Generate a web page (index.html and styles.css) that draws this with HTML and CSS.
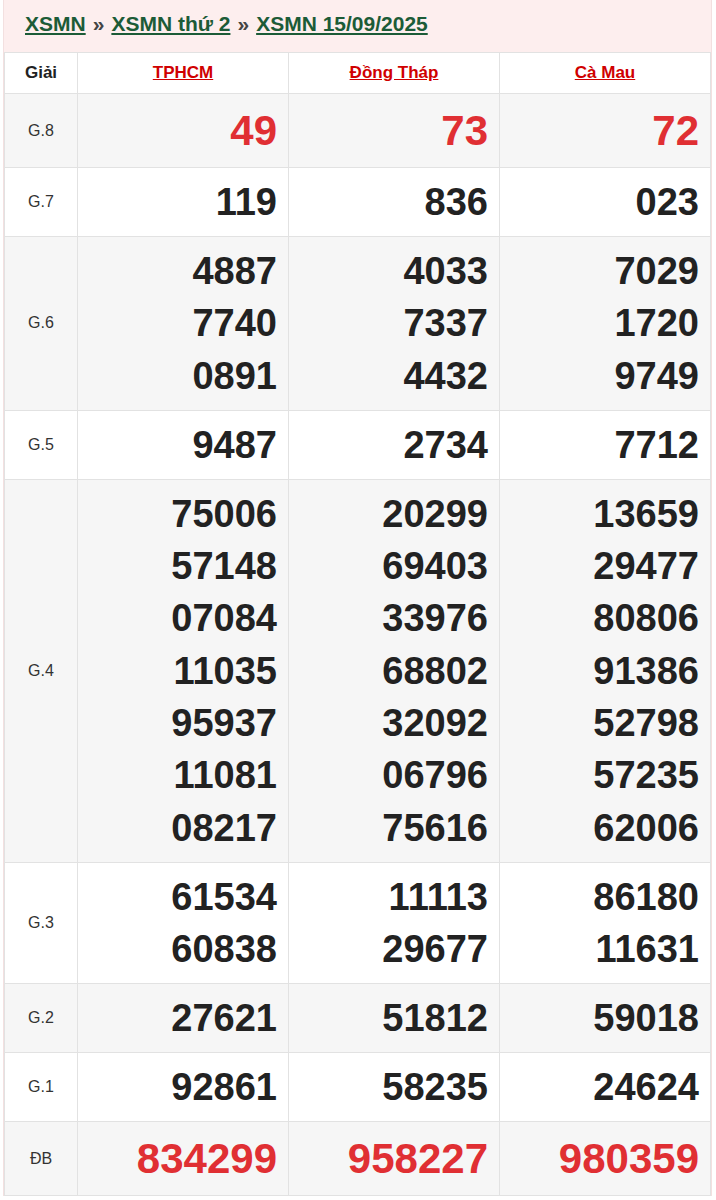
FILE: index.html
```html
<!DOCTYPE html>
<html lang="vi">
<head>
<meta charset="utf-8">
<title>XSMN 15/09/2025</title>
<link rel="stylesheet" href="styles.css">
</head>
<body>
<div class="box">
  <div class="crumbs">
    <a href="#">XSMN</a><span class="sep">»</span><a href="#">XSMN thứ 2</a><span class="sep">»</span><a href="#">XSMN 15/09/2025</a>
  </div>
  <table class="kq">
    <colgroup><col class="c-label"><col class="c-prov"><col class="c-prov"><col class="c-prov"></colgroup>
    <thead>
      <tr><th class="lbl-h">Giải</th><th><a href="#">TPHCM</a></th><th><a href="#">Đồng Tháp</a></th><th><a href="#">Cà Mau</a></th></tr>
    </thead>
    <tbody>
      <tr class="alt big">
        <td class="lbl">G.8</td><td><div class="n red">49</div></td><td><div class="n red">73</div></td><td><div class="n red">72</div></td>
      </tr>
      <tr>
        <td class="lbl">G.7</td><td><div class="n">119</div></td><td><div class="n">836</div></td><td><div class="n">023</div></td>
      </tr>
      <tr class="alt">
        <td class="lbl">G.6</td>
        <td><div class="n">4887</div><div class="n">7740</div><div class="n">0891</div></td>
        <td><div class="n">4033</div><div class="n">7337</div><div class="n">4432</div></td>
        <td><div class="n">7029</div><div class="n">1720</div><div class="n">9749</div></td>
      </tr>
      <tr>
        <td class="lbl">G.5</td><td><div class="n">9487</div></td><td><div class="n">2734</div></td><td><div class="n">7712</div></td>
      </tr>
      <tr class="alt">
        <td class="lbl">G.4</td>
        <td><div class="n">75006</div><div class="n">57148</div><div class="n">07084</div><div class="n">11035</div><div class="n">95937</div><div class="n">11081</div><div class="n">08217</div></td>
        <td><div class="n">20299</div><div class="n">69403</div><div class="n">33976</div><div class="n">68802</div><div class="n">32092</div><div class="n">06796</div><div class="n">75616</div></td>
        <td><div class="n">13659</div><div class="n">29477</div><div class="n">80806</div><div class="n">91386</div><div class="n">52798</div><div class="n">57235</div><div class="n">62006</div></td>
      </tr>
      <tr>
        <td class="lbl">G.3</td>
        <td><div class="n">61534</div><div class="n">60838</div></td>
        <td><div class="n">11113</div><div class="n">29677</div></td>
        <td><div class="n">86180</div><div class="n">11631</div></td>
      </tr>
      <tr class="alt">
        <td class="lbl">G.2</td><td><div class="n">27621</div></td><td><div class="n">51812</div></td><td><div class="n">59018</div></td>
      </tr>
      <tr>
        <td class="lbl">G.1</td><td><div class="n">92861</div></td><td><div class="n">58235</div></td><td><div class="n">24624</div></td>
      </tr>
      <tr class="alt big">
        <td class="lbl">ĐB</td><td><div class="n red">834299</div></td><td><div class="n red">958227</div></td><td><div class="n red">980359</div></td>
      </tr>
    </tbody>
  </table>
</div>
</body>
</html>
```

FILE: styles.css
```css
html, body {
  margin: 0;
  padding: 0;
  background: #ffffff;
}

body {
  font-family: "Liberation Sans", Arial, sans-serif;
  color: #222;
}

.box {
  margin-left: 3px;
  width: 707px;
  background: #fdeeee;
  border-left: 1px solid #f3e0e0;
  border-right: 1px solid #f3e0e0;
}

.crumbs {
  height: 52px;
  display: flex;
  align-items: center;
  padding-left: 21px;
  font-size: 21px;
  font-weight: bold;
  box-sizing: border-box;
  padding-bottom: 4px;
}

.crumbs a {
  color: #1c5b37;
  text-decoration: underline;
  text-underline-offset: 2px;
}

.crumbs .sep {
  color: #444;
  margin: 0 7px;
}

.kq {
  width: 707px;
  border-collapse: collapse;
  table-layout: fixed;
  background: #fff;
}

.c-label { width: 73px; }

.kq th, .kq td {
  border: 1px solid #e2e2e2;
}

.kq th {
  height: 40px;
  padding: 0;
  font-size: 17px;
  font-weight: bold;
  text-align: center;
  vertical-align: middle;
}

.kq th.lbl-h {
  color: #222;
}

.kq th a {
  color: #d00000;
  text-decoration: underline;
}

.kq td {
  padding: 8px 11px 7.67px 4px;
  text-align: right;
  vertical-align: middle;
}

.kq td.lbl {
  text-align: center;
  padding: 0;
  font-size: 16px;
  color: #333;
}

.kq tr.alt td {
  background: #f6f6f6;
}

.n {
  font-size: 38px;
  font-weight: bold;
  line-height: 52.33px;
  color: #222;
}

.big .n {
  font-size: 42px;
  line-height: 57.5px;
}

.n.red {
  color: #e02f33;
}
```
